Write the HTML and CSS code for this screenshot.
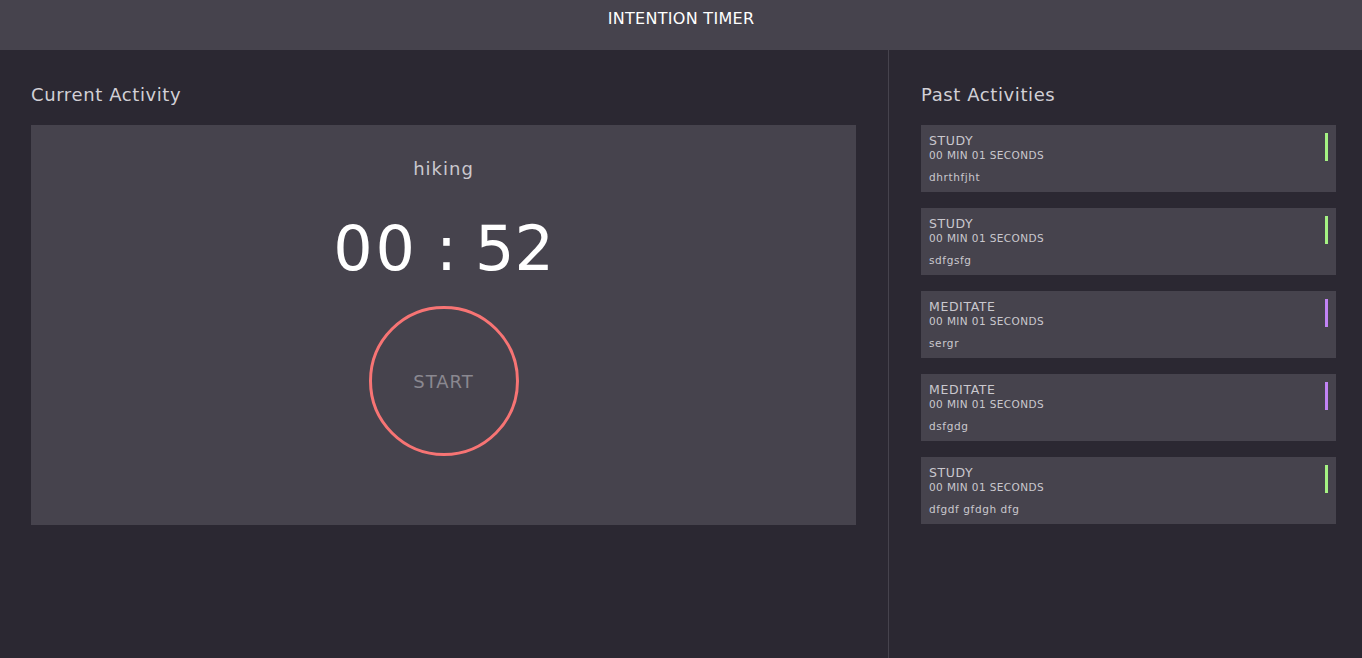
FILE: index.html
```html
<!DOCTYPE html>
<html lang="en">
<head>
<meta charset="utf-8">
<title>Intention Timer</title>
<link rel="stylesheet" href="styles.css">
</head>
<body>
<header class="topbar">
  <h1 class="topbar-title">INTENTION TIMER</h1>
</header>
<main class="layout">
  <section class="current">
    <h2 class="section-title">Current Activity</h2>
    <div class="timer-card">
      <p class="activity-name">hiking</p>
      <p class="clock"><span class="clock-min">00</span><span class="colon">:</span><span class="clock-sec">52</span></p>
      <button class="start-btn" type="button">START</button>
    </div>
  </section>
  <aside class="past">
    <h2 class="section-title">Past Activities</h2>
    <ul class="past-list">
      <li class="past-card">
        <div class="past-info">
          <p class="past-cat">STUDY</p>
          <p class="past-time">00 MIN 01 SECONDS</p>
          <p class="past-desc">dhrthfjht</p>
        </div>
        <span class="tag tag-study"></span>
      </li>
      <li class="past-card">
        <div class="past-info">
          <p class="past-cat">STUDY</p>
          <p class="past-time">00 MIN 01 SECONDS</p>
          <p class="past-desc">sdfgsfg</p>
        </div>
        <span class="tag tag-study"></span>
      </li>
      <li class="past-card">
        <div class="past-info">
          <p class="past-cat">MEDITATE</p>
          <p class="past-time">00 MIN 01 SECONDS</p>
          <p class="past-desc">sergr</p>
        </div>
        <span class="tag tag-meditate"></span>
      </li>
      <li class="past-card">
        <div class="past-info">
          <p class="past-cat">MEDITATE</p>
          <p class="past-time">00 MIN 01 SECONDS</p>
          <p class="past-desc">dsfgdg</p>
        </div>
        <span class="tag tag-meditate"></span>
      </li>
      <li class="past-card">
        <div class="past-info">
          <p class="past-cat">STUDY</p>
          <p class="past-time">00 MIN 01 SECONDS</p>
          <p class="past-desc">dfgdf gfdgh dfg</p>
        </div>
        <span class="tag tag-study"></span>
      </li>
    </ul>
  </aside>
</main>
</body>
</html>
```
FILE: styles.css
```css
* { box-sizing: border-box; }
html, body { margin: 0; padding: 0; height: 100%; }
body {
  background: #2b2832;
  color: #cac8ce;
  font-family: "DejaVu Sans", "Open Sans", sans-serif;
  overflow: hidden;
}
p, h1, h2, ul { margin: 0; padding: 0; }

.topbar {
  height: 50px;
  background: #46434d;
  display: flex;
  justify-content: center;
}
.topbar-title {
  font-size: 16px;
  font-weight: 400;
  letter-spacing: 0.3px;
  color: #ffffff;
  line-height: 37px;
}

.layout {
  display: grid;
  grid-template-columns: 888px 1fr;
  height: 608px;
}
.current {
  padding: 32px 32px 0 31px;
}
.past {
  border-left: 1px solid #46434d;
  padding: 32px 26px 0 32px;
}
.section-title {
  font-size: 18px;
  font-weight: 400;
  letter-spacing: 0.6px;
  color: #d2d0d6;
  line-height: 26px;
  margin-bottom: 17px;
}

.timer-card {
  background: #46434d;
  height: 400px;
  display: flex;
  flex-direction: column;
  align-items: center;
  padding-top: 32px;
}
.activity-name {
  font-size: 18px;
  letter-spacing: 1px;
  color: #cac8ce;
  line-height: 24px;
}
.clock {
  margin-top: 28px;
  font-size: 62px;
  color: #ffffff;
  line-height: 80px;
  display: flex;
  gap: 18px;
}
.clock-min { letter-spacing: 3px; }
.clock-sec { letter-spacing: 0; }
.start-btn {
  margin-top: 17px;
  width: 150px;
  height: 150px;
  border-radius: 50%;
  border: 3px solid #f77474;
  background: transparent;
  color: #8a8890;
  font-family: inherit;
  font-size: 18px;
  letter-spacing: 1px;
  padding: 0;
}

.past-list {
  list-style: none;
  display: flex;
  flex-direction: column;
  gap: 16px;
}
.past-card {
  background: #46434d;
  height: 67px;
  padding: 8px 8px 0 8px;
  display: flex;
  justify-content: space-between;
  align-items: flex-start;
}
.past-cat {
  font-size: 12.5px;
  letter-spacing: 0.6px;
  line-height: 15px;
  color: #cac8ce;
}
.past-time {
  font-size: 10.5px;
  letter-spacing: 0.4px;
  line-height: 14px;
  color: #cac8ce;
}
.past-desc {
  margin-top: 8px;
  font-size: 10.5px;
  letter-spacing: 0.6px;
  line-height: 14px;
  color: #cac8ce;
}
.tag {
  width: 3px;
  height: 28px;
}
.tag-study { background: #a5f283; }
.tag-meditate { background: #c183f5; }
```
